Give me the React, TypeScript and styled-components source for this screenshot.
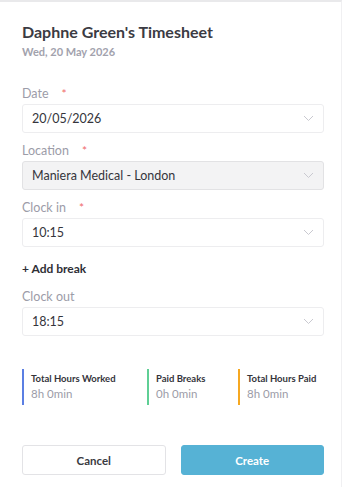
import React from 'react';
import styled, { createGlobalStyle } from 'styled-components';

const GlobalStyle = createGlobalStyle`
  html, body {
    margin: 0;
    padding: 0;
    background: #fff;
  }
  body {
    font-family: 'Lato', 'Liberation Sans', sans-serif;
    -webkit-font-smoothing: antialiased;
  }
`;

const Page = styled.div`
  width: 342px;
  min-height: 487px;
  box-sizing: border-box;
  border-top: 2px solid #e9e9eb;
  border-right: 1px solid #f0f0f2;
  padding: 20px 17px 0 22px;
`;

const Title = styled.h1`
  margin: 0;
  font-size: 16px;
  line-height: 20px;
  font-weight: 700;
  color: #3b3b43;
`;

const Subtitle = styled.div`
  margin-top: 3px;
  font-size: 11px;
  line-height: 14px;
  font-weight: 700;
  color: #a2a2ad;
`;

const Form = styled.div`
  margin-top: 28px;
  display: flex;
  flex-direction: column;
`;

const Field = styled.div`
  display: flex;
  flex-direction: column;
  margin-bottom: 11px;
`;

const Label = styled.label`
  display: flex;
  align-items: center;
  gap: 13px;
  font-size: 12.5px;
  line-height: 14px;
  color: #9c9ca8;
  margin-bottom: 3px;
`;

const Star = styled.span`
  color: #f06a6a;
  font-size: 12px;
`;

const Select = styled.div<{ disabled?: boolean }>`
  height: 29px;
  box-sizing: border-box;
  display: flex;
  align-items: center;
  justify-content: space-between;
  padding: 0 9px 0 9px;
  border: 1px solid ${(p) => (p.disabled ? '#e2e2e4' : '#ededef')};
  border-radius: 3px;
  background: ${(p) => (p.disabled ? '#f3f3f4' : '#fff')};
  font-size: 12.5px;
  color: #35353c;
`;

const Chevron = () => (
  <svg width="11" height="7" viewBox="0 0 11 7" fill="none">
    <path d="M1 1l4.5 4.5L10 1" stroke="#c9c9d0" strokeWidth="1" />
  </svg>
);

const AddBreak = styled.div`
  font-size: 12px;
  font-weight: 700;
  color: #2f2f36;
  margin: 4px 0 14px;
  line-height: 14px;
`;

const Summary = styled.div`
  margin-top: 22px;
  display: grid;
  grid-template-columns: 125px 91px 1fr;
`;

const Stat = styled.div<{ color: string }>`
  border-left: 2px solid ${(p) => p.color};
  padding: 3px 0 4px 7px;
  display: flex;
  flex-direction: column;
  gap: 2px;
`;

const StatTitle = styled.div`
  font-size: 9.5px;
  font-weight: 700;
  color: #34343b;
  line-height: 13px;
  white-space: nowrap;
`;

const StatValue = styled.div`
  font-size: 11.5px;
  color: #9c9ca8;
  line-height: 14px;
`;

const Buttons = styled.div`
  margin-top: 40px;
  display: grid;
  grid-template-columns: 1fr 1fr;
  gap: 15px;
`;

const Button = styled.button<{ primary?: boolean }>`
  height: 30px;
  border-radius: 3px;
  font-family: inherit;
  font-size: 11.5px;
  font-weight: 700;
  cursor: pointer;
  border: 1px solid ${(p) => (p.primary ? '#56b2d5' : '#e3e3e6')};
  background: ${(p) => (p.primary ? '#56b2d5' : '#fff')};
  color: ${(p) => (p.primary ? '#fff' : '#3a3a41')};
`;

const fields = [
  { label: 'Date', value: '20/05/2026', required: true },
  { label: 'Location', value: 'Maniera Medical - London', required: true, disabled: true },
  { label: 'Clock in', value: '10:15', required: true },
];

const stats = [
  { title: 'Total Hours Worked', value: '8h 0min', color: '#5b7fe3' },
  { title: 'Paid Breaks', value: '0h 0min', color: '#5fcf95' },
  { title: 'Total Hours Paid', value: '8h 0min', color: '#f6a821' },
];

export default function App() {
  return (
    <>
      <GlobalStyle />
      <Page>
        <Title>Daphne Green's Timesheet</Title>
        <Subtitle>Wed, 20 May 2026</Subtitle>
        <Form>
          {fields.map((f) => (
            <Field key={f.label}>
              <Label>
                {f.label}
                {f.required && <Star>*</Star>}
              </Label>
              <Select disabled={f.disabled}>
                {f.value}
                <Chevron />
              </Select>
            </Field>
          ))}
          <AddBreak>+ Add break</AddBreak>
          <Field>
            <Label>Clock out</Label>
            <Select>
              18:15
              <Chevron />
            </Select>
          </Field>
        </Form>
        <Summary>
          {stats.map((s) => (
            <Stat key={s.title} color={s.color}>
              <StatTitle>{s.title}</StatTitle>
              <StatValue>{s.value}</StatValue>
            </Stat>
          ))}
        </Summary>
        <Buttons>
          <Button>Cancel</Button>
          <Button primary>Create</Button>
        </Buttons>
      </Page>
    </>
  );
}
